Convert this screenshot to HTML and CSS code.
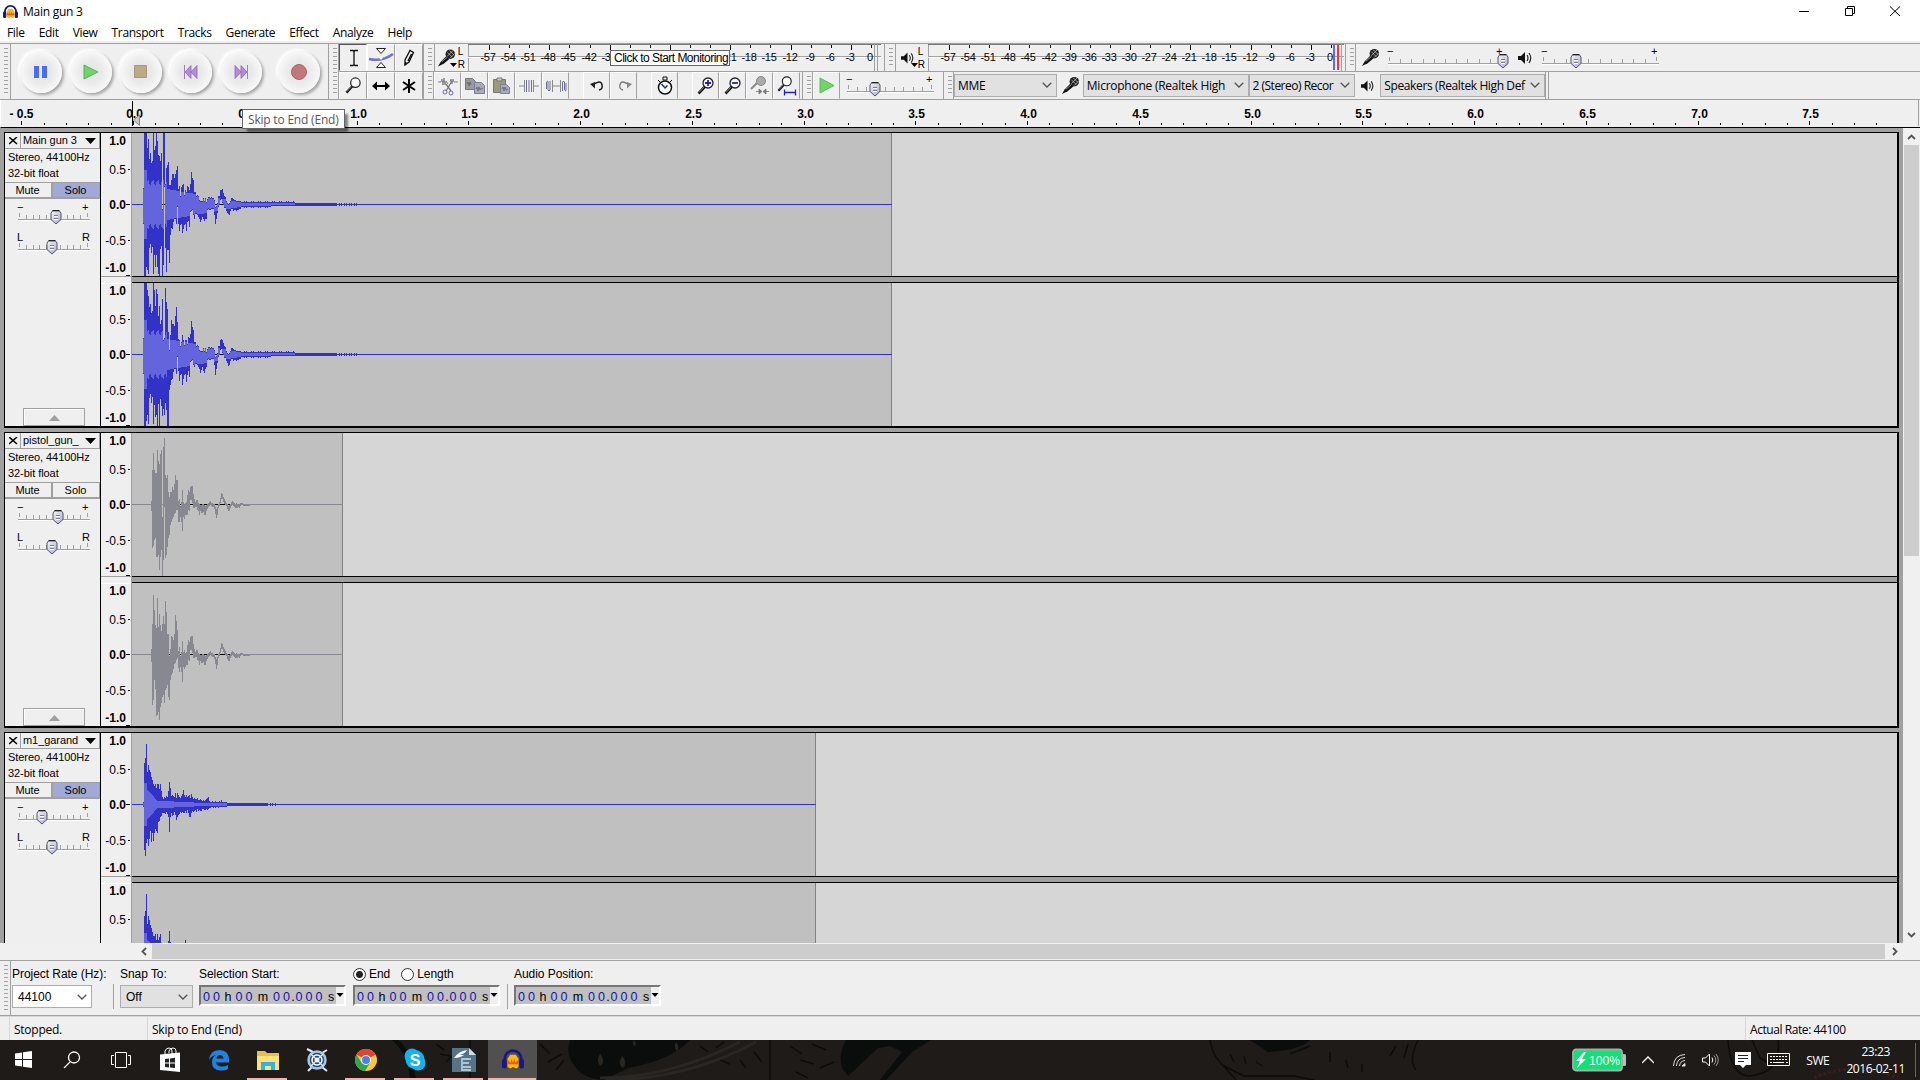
FILE: index.html
```
<!DOCTYPE html>
<html lang="en">
<head>
    <meta charset="UTF-8">
    <meta name="viewport" content="width=device-width, initial-scale=1.0">
    <title>Main gun 3</title>
    <link rel="stylesheet" href="styles.css">
</head>
<body>
    <!-- shared icons -->
    <svg class="defs" width="0" height="0">
        <defs>
            <linearGradient id="knobFill" x1="0" y1="0" x2="1" y2="1">
                <stop offset="0" stop-color="#f4f4ff"/><stop offset="1" stop-color="#a9a9cc"/>
            </linearGradient>
            <symbol id="knob" viewBox="0 0 12 15">
                <path d="M2.500 1h7L11 3v6.500L6 14 1 9.500V3z" fill="url(#knobFill)" stroke="#55556a"/>
                <path d="M2.500.5h7" stroke="#222"/>
                <path d="M4 5.500h4M4 8.500h4" stroke="#7a7aa0"/><path d="M4 6.500h4M4 9.500h4" stroke="#fff"/>
            </symbol>
            <symbol id="mic" viewBox="0 0 20 20">
                <path d="M1 19l3-5 6-6 3 3-6 5z" fill="#111"/>
                <circle cx="14" cy="6" r="5" fill="#222"/>
                <path d="M11 4l5 5M13 2l5 5M11 8l6-6M14 10l5-5" stroke="#bbb" stroke-width=".8"/>
                <path d="M5 14l6-5" stroke="#999"/>
            </symbol>
            <symbol id="speaker" viewBox="0 0 14 14">
                <path d="M0 5h3l4-4v12L3 9H0z" fill="#111"/>
                <path d="M9 4q2 3 0 6M11 2q3.500 5 0 10" fill="none" stroke="#222" stroke-width="1.200"/>
            </symbol>
            <symbol id="lens" viewBox="0 0 18 18">
                <path d="M1.500 16.500L8 9.500" stroke="#111" stroke-width="2.600"/>
                <path d="M2 15.500l5-5.500" stroke="#999" stroke-width=".8"/>
                <circle cx="11" cy="6" r="5" fill="#fafafa" stroke="#222" stroke-width="1.300"/>
            </symbol>
            <symbol id="down" viewBox="0 0 10 6"><path d="M.7.7L5 5 9.300.7" fill="none" stroke="#555" stroke-width="1.300"/></symbol>
            <symbol id="phones" viewBox="0 0 16 15">
                <path d="M2 10V7a6 6 0 0 1 12 0v3" fill="none" stroke="#17178a" stroke-width="2"/>
                <rect x="0" y="7" width="3.500" height="7" rx="1.500" fill="#17178a"/><rect x="12.500" y="7" width="3.500" height="7" rx="1.500" fill="#17178a"/>
                <path d="M4 13V7l2-3h4l2 3v6l-1.500 1L8 13l-2 1z" fill="#fdb813"/>
                <path d="M4 9l1-1 1 2 1-3 1 3 1-3 1 3 1-2 1 1v2H4z" fill="#ee5a12"/>
            </symbol>
        </defs>
    </svg>

    <header class="titlebar">
        <svg class="app-icon" width="15" height="14"><use href="#phones"/></svg>
        <span class="title">Main gun 3</span>
        <svg class="window-buttons" width="110" height="20" fill="none" stroke="#000">
            <path d="M3 9.500h10M49.500 6.500h7v7h-7zM51.500 6.500v-2h7v7h-2M94 4.500l10 9.500M104 4.500l-10 9.500"/>
        </svg>
    </header>

    <nav class="menubar">
        <span>File</span><span>Edit</span><span>View</span><span>Transport</span><span>Tracks</span><span>Generate</span><span>Effect</span><span>Analyze</span><span>Help</span>
    </nav>

    <section class="dock">
        <div class="toolbar transport">
            <i class="grip"></i>
            <div class="round-buttons">
                <button><svg width="14" height="14"><path d="M0 1h5v12H0zM8 1h5v12H8z" fill="#4a6cf0"/></svg></button>
                <button><svg width="16" height="16"><path d="M1 1l14 7-14 7z" fill="#6fd46b" stroke="#55b552"/></svg></button>
                <button><svg width="14" height="14"><path d="M.5.5h12v12H.5z" fill="#bba988" stroke="#a89878"/></svg></button>
                <button><svg width="14" height="14"><path d="M.5 0v14M7 .5v13L1 7zM13 .5v13L7 7z" fill="#b58be0" stroke="#8d66b5" stroke-width=".8"/></svg></button>
                <button><svg width="14" height="14"><path d="M13.500 0v14M1 .5v13L7 7zM7 .5v13L13 7z" fill="#b58be0" stroke="#8d66b5" stroke-width=".8"/></svg></button>
                <button class="record"><svg width="16" height="16"><circle cx="8" cy="8" r="7.500" fill="#c27878" stroke="#a86464"/></svg></button>
            </div>
        </div>

        <div class="toolbar tools">
            <i class="grip"></i>
            <div class="tool-grid">
                <span class="tool pressed"><svg width="12" height="18"><path d="M2 1.500h3l1 1 1-1h3M6 2v14M2 16.500h3l1-1 1 1h3" fill="none" stroke="#111" stroke-width="1.300"/></svg></span>
                <span class="tool"><svg width="26" height="22"><path d="M1 12q13 3 24-5" fill="none" stroke="#6c72dd" stroke-width="2.600"/><path d="M8.500 1.500h9L13 6.500zM8.500 20.500h9L13 15.500z" fill="#fff" stroke="#222"/><circle cx="13" cy="11" r="1.500" fill="#fff"/></svg></span>
                <span class="tool"><svg width="12" height="18"><path d="M2 16l0-5 5-9.500 3.500 2L6 13z" fill="#eee" stroke="#111" stroke-width="1.300"/><path d="M2 16l1-3M5 12l3.500-7" stroke="#111" stroke-width="1.500"/></svg></span>
                <span class="tool"><svg width="17" height="17"><use href="#lens"/></svg></span>
                <span class="tool"><svg width="18" height="12"><path d="M3 6h12" stroke="#000" stroke-width="2"/><path d="M0 6l5-4.500v9zM18 6l-5-4.500v9z"/></svg></span>
                <span class="tool"><svg width="16" height="16"><path d="M8 1v14M2 4l12 8M14 4L2 12" stroke="#000" stroke-width="2"/></svg></span>
            </div>
        </div>

        <div class="dock-rows">
            <div class="dock-row">
                <div class="toolbar meter-in">
                    <i class="grip"></i>
                    <div class="meter-head">
                        <svg width="19" height="20"><use href="#mic"/></svg>
                        <svg class="arrow" width="7" height="4"><path d="M0 0h7L3.500 4z"/></svg>
                        <span class="lr">L<br>R</span>
                    </div>
                    <svg class="meter" id="meterIn" width="413" height="27"></svg>
                    <span class="tip monitor-tip">Click to Start Monitoring</span>
                </div>
                <div class="toolbar meter-out">
                    <i class="grip"></i>
                    <div class="meter-head">
                        <svg width="13" height="14"><use href="#speaker"/></svg>
                        <svg class="arrow" width="7" height="4"><path d="M0 0h7L3.500 4z"/></svg>
                        <span class="lr">L<br>R</span>
                    </div>
                    <svg class="meter" id="meterOut" width="416" height="27"></svg>
                </div>
                <div class="toolbar mixer">
                    <i class="grip"></i>
                    <svg class="mixer-mic" width="19" height="19"><use href="#mic"/></svg>
                    <svg class="slider" data-width="116" data-value="115" data-ticks="10" width="130" height="24"></svg>
                    <svg class="mixer-speaker" width="14" height="14"><use href="#speaker"/></svg>
                    <svg class="slider" data-width="117" data-value="34" data-ticks="10" width="130" height="24"></svg>
                </div>
            </div>

            <div class="dock-row">
                <div class="toolbar edit">
                    <i class="grip"></i>
                    <span class="btn"><svg width="20" height="20" fill="none"><path d="M0 6h3l1-3 1 6 1-7 1 7 1-4 2 3M12 6l1-3 1 5 1-5 1 3h4" stroke="#888"/><path d="M14 5L8 15M8 8l5 7" stroke="#777" stroke-width="1.300"/><circle cx="7" cy="16" r="2" stroke="#6a6ab0"/><circle cx="13" cy="17" r="2" stroke="#6a6ab0"/></svg></span>
                    <span class="btn"><svg width="20" height="18"><path d="M.5 1.500h7l3 3v8H.5z" fill="#9a9a9a" stroke="#777"/><path d="M9.500 5.500h7l3 3v8h-10z" fill="#a9a9b8" stroke="#7b7baf"/><path d="M2 7l1-2 1 4 1-4 1 3M11 12l1-2 1 4 1-4 1 3 1-2 2 1" stroke="#666" fill="none" stroke-width=".8"/></svg></span>
                    <span class="btn"><svg width="18" height="18"><path d="M.5 2.500h12v13H.5z" fill="#9d9a76" stroke="#777"/><path d="M4 1h5v3H4z" fill="#ccc" stroke="#777"/><path d="M7.500 7.500h6l3 3v6h-9z" fill="#a9a9b8" stroke="#7b7baf"/><path d="M9 12l1-2 1 4 1-4 1 3 2-1" stroke="#666" fill="none" stroke-width=".8"/></svg></span>
                    <span class="btn"><svg width="20" height="16" fill="none" stroke="#6e6e9a"><path d="M0 8h5M15 8h5M5.500 2v12M14.500 2v12" stroke="#888"/><path d="M7.500 2v12M10 2v12M12.500 2v12"/></svg></span>
                    <span class="btn"><svg width="21" height="16" fill="none" stroke="#6e6e9a"><path d="M6.500 2v12M14.500 2v12M6 8h8" stroke="#888"/><path d="M.5 11V4q1.500-2 1.500 0v8q1 2 2 0V3M16.500 13V4q1-2 2 0v8q1.500 2 1.500 0V5"/></svg></span>
                    <span class="btn gap"><svg width="15" height="12"><path d="M3 5q8-6 9 0 1 4-3 5" fill="none" stroke="#222" stroke-width="1.500"/><path d="M0 4l5 4.500V2z" fill="#222"/></svg></span>
                    <span class="btn"><svg width="15" height="12"><path d="M12 5q-8-6-9 0-1 4 3 5" fill="none" stroke="#777" stroke-width="1.300"/><path d="M15 4l-5 4.500V2z" fill="#888"/></svg></span>
                    <span class="btn gap"><svg width="18" height="20"><circle cx="9" cy="11.500" r="6.500" fill="#fff" stroke="#111" stroke-width="1.500"/><path d="M7 1h4v3H7zM2 4l2 2M16 4l-2 2" fill="#eee" stroke="#111"/><path d="M5.500 8l3.500 4 2.500-2.500" fill="none" stroke="#2222bb" stroke-width="1.500"/></svg></span>
                    <span class="btn gap"><svg width="18" height="18"><use href="#lens"/><path d="M8 6h6M11 3v6" stroke="#22b" stroke-width="1.800"/></svg></span>
                    <span class="btn"><svg width="18" height="18"><use href="#lens"/><path d="M8 6h6" stroke="#22b" stroke-width="1.800"/></svg></span>
                    <span class="btn"><svg width="20" height="20"><path d="M1 13l6-6" stroke="#888" stroke-width="2"/><circle cx="11" cy="5" r="4.500" fill="#aaa" stroke="#888"/><path d="M6 15.500h5M14 15.500h5M9 13l3 2.500-3 2.500zM16 13l-3 2.500 3 2.500z" fill="#777" stroke="#777" stroke-width=".8"/></svg></span>
                    <span class="btn"><svg width="20" height="20"><use href="#lens" width="16" height="16"/><path d="M7 16.500h12M7.500 13.500v6M18.500 13.500v6" stroke="#22b" stroke-width="1.300"/></svg></span>
                </div>
                <div class="toolbar speed">
                    <i class="grip"></i>
                    <span class="btn"><svg width="16" height="17"><path d="M1 1l14 7.500L1 16z" fill="#6fd46b" stroke="#5cba58"/></svg></span>
                    <svg class="slider" data-width="87" data-value="28" data-ticks="9" width="98" height="24"></svg>
                </div>
                <div class="toolbar device">
                    <i class="grip"></i>
                    <span class="combo host">MME<svg width="10" height="6"><use href="#down"/></svg></span>
                    <svg class="device-mic" width="19" height="19"><use href="#mic"/></svg>
                    <span class="combo input">Microphone (Realtek High<svg width="10" height="6"><use href="#down"/></svg></span>
                    <span class="combo channels">2 (Stereo) Recor<svg width="10" height="6"><use href="#down"/></svg></span>
                    <svg class="device-speaker" width="13" height="14"><use href="#speaker"/></svg>
                    <span class="combo output">Speakers (Realtek High Def<svg width="10" height="6"><use href="#down"/></svg></span>
                </div>
            </div>
        </div>
    </section>

    <section class="timeline">
        <svg id="ruler" width="1918" height="27"></svg>
        <span class="tip skip-tip">Skip to End (End)</span>
    </section>

    <main class="workspace">
        <div class="tracks">
            <article class="track solo" data-wave="main" data-end="760" data-gain="38">
                <h2>Main gun 3</h2>
            </article>
            <article class="track muted" data-wave="pistol" data-end="211" data-gain="40">
                <h2>pistol_gun_</h2>
            </article>
            <article class="track solo" data-wave="garand" data-end="684" data-gain="24">
                <h2>m1_garand</h2>
            </article>
        </div>
        <div class="vscroll">
            <svg width="9" height="6"><path d="M1 5l3.500-3.500L8 5" fill="none" stroke="#555" stroke-width="1.800"/></svg>
            <i></i>
            <svg width="9" height="6"><path d="M1 1l3.500 3.500L8 1" fill="none" stroke="#555" stroke-width="1.800"/></svg>
        </div>
    </main>

    <div class="hscroll">
        <svg width="6" height="9"><path d="M5 1L1.500 4.500 5 8" fill="none" stroke="#555" stroke-width="1.800"/></svg>
        <i></i>
        <svg width="6" height="9"><path d="M1 1l3.500 3.500L1 8" fill="none" stroke="#555" stroke-width="1.800"/></svg>
    </div>

    <section class="selection">
        <i class="grip"></i>
        <div class="field rate">
            <label>Project Rate (Hz):</label>
            <span class="combo">44100<svg width="10" height="6"><use href="#down"/></svg></span>
        </div>
        <div class="field snap">
            <label>Snap To:</label>
            <span class="combo">Off<svg width="10" height="6"><use href="#down"/></svg></span>
        </div>
        <div class="field start">
            <label>Selection Start:</label>
            <svg class="time" width="147" height="21"></svg>
        </div>
        <div class="field end">
            <label><i class="radio on"></i>End<i class="radio"></i>Length</label>
            <svg class="time" width="147" height="21"></svg>
        </div>
        <div class="field position">
            <label>Audio Position:</label>
            <svg class="time" width="147" height="21"></svg>
        </div>
    </section>

    <footer class="status">
        <span class="state">Stopped.</span>
        <span class="hint">Skip to End (End)</span>
        <span class="actual">Actual Rate: 44100</span>
    </footer>

    <div class="taskbar">
        <svg class="wallpaper" width="1920" height="40">
            <g fill="#0b0c0c">
                <path d="M398 0q14 10 18 40h-6Q408 14 392 0zM570 0q-6 16 8 30 6 8 26 10l24-12q44-8 62-28zM846 0q-8 14-4 28l6 8 30-28 12-2 12 6-22 28h6l26-28 22-14zM1250 0h60q-10 10-42 12z"/>
            </g>
            <g fill="none" stroke="#0d0c0b" stroke-width="1.500">
                <path d="M1210 0q2 14 10 22l16 18M1224 26l20 10h50l20 4M1418 0q-10 20-2 30M1728 0q2 34 20 36 34-2 30-36M1752 0l8 18 10 6"/>
                <path d="M436 4l8 6M440 14l10 2M446 22l6-6M456 8l6 8M470 0v40M540 4l10 10M548 22l14-8M556 30l8-10M770 0v40M700 6l8 6M716 8l8-6M720 20l10 4M790 6l12 8M800 20l14 4M812 4l14 6M820 28l14-6M796 32l12 6M740 20l6 8M754 12l8 10M1230 14l4 8M1244 16l2 8M1256 22l6 4M1290 14l20-8M1330 12v10M1346 20l2 8M1362 24v8M1390 16l6-10M1408 4l-4 14"/>
            </g>
            <g fill="none" stroke="#2a2722" stroke-width="3"><path d="M600 38q70 0 140-36M606 40q80 0 150-38"/></g>
            <g fill="#2a2722"><path d="M600 14q6 6 1 12-6-4-1-12zM622 16q6 6 1 12-6-4-1-12zM676 2q4 6 1 9-4-4-1-9zM634 0q3 4 1 6-4-2-1-6z"/></g>
            <path d="M1814 38q40-18 84 0" fill="none" stroke="#3a1d1a" stroke-width="3" stroke-dasharray="3 2"/>
        </svg>
        <div class="apps">
            <span><svg width="17" height="17" fill="#fff"><path d="M0 2.500l7-1V8H0zM8 1.300L17 0v8H8zM0 9h7v6.500l-7-1zM8 9h9v8l-9-1.300z"/></svg></span>
            <span><svg width="18" height="18" fill="none" stroke="#fff" stroke-width="1.300"><circle cx="11" cy="6.500" r="5.500"/><path d="M7 11l-6 6"/></svg></span>
            <span><svg width="20" height="16" fill="none" stroke="#fff"><path d="M4.500.5h11v15h-11zM3 3.500H.5v9H3M17 3.500h2.500v9H17"/></svg></span>
            <span><svg width="22" height="26"><path d="M1 7.500l20-2V25L1 23z" fill="#fff"/><path d="M6 7V4q1-3 4-3t3 3v3M10 6V4q1-3 4-3t3 3v2" fill="none" stroke="#fff"/><path d="M6 12l4-.5v4H6zM11 11.500l5-.7v4.700h-5zM6 16.500h4v4l-4-.4zM11 16.500h5v4.600l-5-.6z" fill="#222"/></svg></span>
            <span><svg width="22" height="22"><path d="M1 11Q2 1 11.500 1 21 1.500 21 11v2.500H8q1 4 6 4 3 0 6-1.500v4Q17 22 12 21.500 4 21 4 13q0-5 4-7Q3 7 1 11zM8.500 9.500h7Q15 6 12 6T8.500 9.500z" fill="#1f83dd"/></svg></span>
            <span class="open"><svg width="22" height="22"><path d="M0 2h8l2 2h12v17H0z" fill="#e9bd4e"/><path d="M0 7h22v14H0z" fill="#fde27c"/><path d="M4 21v-8h14v8h-4v-4H8v4z" fill="#35b0e6"/></svg></span>
            <span><svg width="22" height="24"><g fill="none" stroke="#a9c6e8"><path d="M1 1l6 3M21 2l-5 3M2 23l4-4M21 23l-5-4" stroke="#dbe8f8" stroke-width="2"/><circle cx="11" cy="12" r="8.500" fill="#2b4a7a" stroke-width="2.500"/><circle cx="11" cy="12" r="5" stroke="#fff" stroke-width="1.500"/><path d="M5 6l12 12M17 6L5 18" stroke="#dbe8f8" stroke-width="1.300"/></g><circle cx="11" cy="12" r="2.500" fill="#e9f2ff"/></svg></span>
            <span class="open"><svg width="22" height="22"><circle cx="11" cy="11" r="11" fill="#fcc934"/><path d="M11 11L1.500 5.500A11 11 0 0 1 20.500 5.500z" fill="#df4434"/><path d="M1.500 5.500A11 11 0 0 0 10 22l5.300-8.500H6.500z" fill="#35a252"/><circle cx="11" cy="11" r="5" fill="#fff"/><circle cx="11" cy="11" r="4" fill="#4484f0"/></svg></span>
            <span class="open"><svg width="22" height="23"><circle cx="8" cy="8" r="7.500" fill="#16b1ef"/><circle cx="14" cy="15" r="7.500" fill="#16b1ef"/><circle cx="11" cy="11.500" r="9.500" fill="#16b1ef"/><text x="5.700" y="17.500" class="skype">S</text></svg></span>
            <span class="open"><svg width="24" height="24"><path d="M0 0h17l7 7v17H0z" fill="#55748a"/><path d="M17 0l7 7h-7z" fill="#d5dde2"/><path d="M2 10q5-7 13-8-2 4-8 5 3 0 5 0-4 3-10 3z" fill="#fff"/><path d="M10 11h9M10 15h7M10 19h9M10 22h9M10 10v13" stroke="#b4c4ce" stroke-width="1.800"/></svg></span>
            <span class="open active"><svg width="22" height="21"><use href="#phones"/></svg></span>
        </div>
        <div class="tray">
            <svg class="battery" width="54" height="24"><rect x="50" y="6" width="4" height="12" rx="1.500" fill="#bbb"/><rect x="1" y="1.500" width="49" height="21" rx="3" fill="#10e077" stroke="#aaa" stroke-width="1.800"/><path d="M12 4L4 13h4l-3 7 9-9h-4l4-7z" fill="#fff"/><text x="17" y="17" textLength="31" lengthAdjust="spacingAndGlyphs">100%</text></svg>
            <svg class="chevron" width="12" height="8"><path d="M0 7l6-6 6 6" fill="none" stroke="#fff" stroke-width="1.300"/></svg>
            <svg width="13" height="13" fill="none" stroke="#ddd"><path d="M.5 12Q1 1 12 .5M3.500 12Q4 4 12 3.500M6.500 12Q7 7 12 6.500"/><path d="M9 12h3v-2.500z" fill="#fff"/></svg>
            <svg width="17" height="15" fill="none" stroke="#fff"><path d="M.5 5h3l4-4v12l-4-4h-3z"/><path d="M10 4.500q1.500 2.500 0 5"/><path d="M12 2.500q3.500 4.500 0 9M14 1q4.500 6 0 12" stroke="#999"/></svg>
            <svg width="16" height="16"><path d="M0 0h16v13h-5l-3 3-3-3H0z" fill="#fff"/><path d="M3 3.500h10M3 6.500h10M3 9.500h6" stroke="#222"/></svg>
            <svg width="24" height="14" fill="none" stroke="#fff"><path d="M.5.5h22v12H.5z"/><path d="M3 3.500h18M3 6.500h18" stroke-dasharray="2 1"/><path d="M3 9.500h2M6 9.500h11M19 9.500h2"/></svg>
            <span class="lang">SWE</span>
            <span class="clock">23:23<br>2016-02-11</span>
        </div>
    </div>

    <script src="app.js"></script>
</body>
</html>
```

FILE: styles.css
```
* {
    box-sizing: border-box;
}

body {
    margin: 0;
    width: 1920px;
    height: 1080px;
    overflow: hidden;
    display: flex;
    flex-direction: column;
    background: #efefef;
    color: #000;
    font-family: "Open Sans", "Noto Sans", sans-serif;
    font-size: 12px;
    white-space: nowrap;
}

svg {
    display: block;
    flex: none;
}

svg text {
    font-family: "Liberation Sans", Arial, sans-serif;
}

.defs {
    position: absolute;
}

/* title and menu */
.titlebar {
    height: 22px;
    flex: none;
    display: flex;
    align-items: center;
    background: #fff;
    padding: 1px 16px 0 3px;
}

.title {
    margin-left: 5px;
    letter-spacing: -0.25px;
}

.window-buttons {
    margin-left: auto;
    margin-right: -2px;
}

.menubar {
    height: 21px;
    flex: none;
    display: flex;
    gap: 14px;
    padding: 2px 0 0 7px;
    line-height: 18px;
    background: linear-gradient(#fff 19px, #efefef 19px);
    letter-spacing: -0.33px;
}

/* toolbars */
.dock {
    height: 57px;
    flex: none;
    display: flex;
    border-top: 1px solid #a0a0a0;
    border-bottom: 1px solid #a0a0a0;
}

.toolbar {
    display: flex;
    align-items: center;
    position: relative;
}

.grip {
    flex: none;
    align-self: stretch;
    width: 11px;
    border-right: 1px solid #a0a0a0;
    background: repeating-linear-gradient(#a0a0a0 0 1px, #efefef 1px 4px) 4px 4px / 4px calc(100% - 8px) no-repeat;
}

.transport {
    width: 329px;
    border-right: 1px solid #a0a0a0;
}

.round-buttons {
    display: flex;
    gap: 8px;
    padding-left: 9px;
}

.round-buttons button {
    width: 42px;
    height: 42px;
    padding: 0;
    border: none;
    border-radius: 50%;
    display: flex;
    align-items: center;
    justify-content: center;
    background: radial-gradient(#e9e9e9 35%, #f6f6f6 65%, #fbfbfb);
    box-shadow: 2px 2px 3px #a5a5a5, -2px -2px 3px #fff;
}

.round-buttons .record {
    margin-left: 8px;
}

.tools {
    width: 95px;
    border-right: 1px solid #a0a0a0;
}

.tools .grip {
    width: 10px;
}

.tool-grid {
    display: grid;
    grid-template-columns: 28px 28px 28px;
    grid-template-rows: 27px 27px;
    row-gap: 1px;
    background: #a0a0a0;
}

.tool,
.btn {
    display: flex;
    align-items: center;
    justify-content: center;
    background: #efefef;
    border: 1px solid #fff;
    border-right-color: #a0a0a0;
    border-bottom-color: #efefef;
}

.tool.pressed {
    border-color: #555 #fff #efefef #555;
    padding-left: 2px;
}

.dock-rows {
    flex: 1;
    display: grid;
    grid-template-rows: 27px 27px;
    row-gap: 1px;
    background: #a0a0a0;
}

.dock-row {
    display: flex;
    background: #efefef;
}

.meter-in {
    width: 461px;
    border-right: 1px solid #a0a0a0;
}

.meter-out {
    width: 461px;
    border-right: 1px solid #a0a0a0;
}

.meter-head {
    display: flex;
    align-items: center;
    width: 33px;
    padding-left: 2px;
    position: relative;
}

.meter-out .meter-head {
    width: 32px;
    padding-left: 5px;
}

.meter-head .arrow {
    position: absolute;
    left: 15px;
    top: 18px;
}

.lr {
    margin-left: auto;
    margin-right: 3px;
    font: 10px/13px "Liberation Sans", Arial, sans-serif;
}

.meter text {
    font-size: 11px;
    letter-spacing: -0.3px;
    text-anchor: middle;
}

.tip {
    position: absolute;
    z-index: 2;
    background: #fff;
    border: 1px solid #666;
    line-height: 14px;
}

.monitor-tip {
    left: 186px;
    top: 6px;
    width: 120px;
    padding: 0 3px;
    font: 12px/14px "Liberation Sans", Arial, sans-serif;
    letter-spacing: -0.53px;
}

.mixer .grip {
    width: 10px;
}

.mixer-mic {
    margin-left: 5px;
}

.mixer .slider {
    margin-left: 3px;
    margin-top: -2px;
}

.mixer .mixer-speaker {
    margin: 0 2px 0 5px;
}

.slider text {
    font-size: 11px;
}

.edit,
.speed {
    align-items: stretch;
}

.edit .grip,
.speed .grip {
    width: 10px;
}

.btn {
    width: 27px;
}

.btn.gap {
    margin-left: 14px;
}

.btn svg {
    margin-left: 1px;
}

.edit {
    width: 379px;
    border-right: 1px solid #a0a0a0;
}

.speed {
    width: 141px;
    border-right: 1px solid #a0a0a0;
}

.speed .slider {
    margin: 1px 0 0 2px;
}

.device .grip {
    width: 10px;
}

.combo {
    display: flex;
    align-items: center;
    justify-content: space-between;
    height: 23px;
    padding: 0 4px 1px 3px;
    border: 1px solid #adadad;
    background: #e1e1e1;
    letter-spacing: -0.25px;
}

.host {
    width: 103px;
}

.device-mic {
    margin: 0 3px 0 4px;
}

.input {
    width: 166px;
}

.channels {
    width: 107px;
    letter-spacing: -0.5px;
}

.device-speaker {
    margin: 0 6px;
}

.output {
    width: 165px;
    letter-spacing: -0.38px;
}

.device {
    width: 605px;
    border-right: 4px double #a0a0a0;
}

/* ruler */
.timeline {
    position: relative;
    height: 28px;
    flex: none;
    border-bottom: 1px solid #000;
    border-left: 1px solid #fff;
}

#ruler text {
    font-size: 12px;
    font-weight: bold;
    text-anchor: middle;
}

.skip-tip {
    left: 241px;
    top: 9px;
    width: 103px;
    height: 20px;
    padding: 1px 5px;
    line-height: 17px;
    color: #575757;
    box-shadow: 4px 4px 2px -1px rgba(0, 0, 0, 0.45);
    letter-spacing: -0.2px;
}

/* tracks */
.workspace {
    height: 815px;
    flex: none;
    display: flex;
    overflow: hidden;
    position: relative;
}

.tracks {
    width: 1903px;
    padding: 4px 4px 0;
    display: flex;
    flex-direction: column;
    gap: 4px;
    background: #a0a0a0;
}

.track {
    width: 1895px;
    height: 296px;
    flex: none;
    display: flex;
    border: 1px solid #000;
    border-right-width: 2px;
    border-bottom-width: 2px;
}

.panel {
    width: 96px;
    display: flex;
    flex-direction: column;
    background: #efefef;
    border-right: 1px solid #000;
    font: 11px/16px "Liberation Sans", Arial, sans-serif;
    letter-spacing: -0.06px;
}

.panel-head {
    display: flex;
    height: 16px;
    border-bottom: 1px solid #a0a0a0;
}

.close {
    width: 16px;
    padding: 4px 0 0 4px;
    border-right: 1px solid #a0a0a0;
}

.panel h2 {
    flex: 1;
    margin: 0;
    padding: 0 3px 0 2px;
    display: flex;
    align-items: center;
    justify-content: space-between;
    font: inherit;
    line-height: 15px;
    border-right: 1px solid #a0a0a0;
}

.info {
    height: 34px;
    padding: 0 0 0 3px;
    border-bottom: 1px solid #a0a0a0;
}

.switches {
    display: flex;
    height: 16px;
    line-height: 14px;
    border-bottom: 2px solid #a0a0a0;
    text-align: center;
}

.switches span {
    width: 46px;
    padding-right: 1px;
    border-right: 1px solid #a0a0a0;
}

.switches span:first-child {
    width: 48px;
    border-right-width: 2px;
}

.switches span:last-child {
    width: 47px;
}

.solo .switches span:last-child {
    background: #a1a9d4;
}

.panel .slider {
    margin: 2px 0 0 8px;
}

.panel .slider + .slider {
    margin-top: 6px;
}

.collapse {
    width: 62px;
    height: 18px;
    margin: auto 0 0 18px;
    border: 1px solid #a0a0a0;
    box-shadow: inset 1px 1px #fff;
    padding: 6px 0 0 25px;
}

.scale {
    width: 31px;
    background: #efefef;
    border-right: 1px solid #a0a0a0;
}

.scale text {
    font-size: 12px;
    text-anchor: end;
}

.scale .strong {
    font-weight: bold;
}

.waves {
    width: 1765px;
    background: #a0a0a0;
}

.waves svg {
    background: #d6d6d6;
}

.waves svg + svg {
    margin-top: 5px;
    border-top: 1px solid #000;
}

.waves svg:first-child {
    border-bottom: 1px solid #000;
}

/* scrollbars */
.vscroll {
    width: 17px;
    display: flex;
    flex-direction: column;
    align-items: center;
    padding: 6px 0 5px;
    background: #f0f0f0;
}

.vscroll i {
    width: 15px;
    height: 411px;
    margin: 5px 0 auto;
    background: #cdcdcd;
}

.hscroll {
    height: 17px;
    flex: none;
    display: flex;
    align-items: center;
    padding-left: 141px;
    background: #f0f0f0;
}

.hscroll i {
    width: 1733px;
    height: 15px;
    margin: 0 7px 0 5px;
    background: #cdcdcd;
}

/* selection toolbar */
.selection {
    height: 56px;
    flex: none;
    display: flex;
    border-top: 1px solid #a0a0a0;
    border-bottom: 1px solid #a0a0a0;
    font: 12px/14px "Liberation Sans", Arial, sans-serif;
}

.field {
    padding-top: 6px;
    display: flex;
    flex-direction: column;
    gap: 4px;
}

.field label {
    height: 14px;
    display: flex;
    align-items: center;
    letter-spacing: -0.05px;
}

.selection .combo {
    letter-spacing: 0;
    padding: 1px 4px 0 5px;
}

.rate {
    width: 103px;
    padding-left: 1px;
    border-right: 1px solid #a0a0a0;
    border-image: linear-gradient(transparent 23px, #a0a0a0 23px 47px, transparent 47px) 1;
}

.rate .combo {
    width: 80px;
    background: #fff;
}

.snap {
    width: 85px;
    padding-left: 6px;
}

.snap .combo {
    width: 73px;
}

.start {
    width: 154px;
}

.end {
    width: 155px;
    border-right: 1px solid #a0a0a0;
    border-image: linear-gradient(transparent 23px, #a0a0a0 23px 47px, transparent 47px) 1;
}

.position {
    padding-left: 6px;
}

.radio {
    width: 13px;
    height: 13px;
    margin: 0 3px 0 0;
    border: 1px solid #333;
    border-radius: 50%;
    background: #fff;
}

.radio.on {
    background: radial-gradient(#222 3px, #fff 4px);
}

.radio + .radio {
    margin-left: 11px;
}

.time {
    border: 2px solid #777;
    border-right-color: #fff;
    border-bottom-color: #fff;
    background: #c0c0c0;
}

.time text {
    font-size: 12.5px;
    text-anchor: middle;
}

/* status bar */
.status {
    height: 24px;
    flex: none;
    display: flex;
    line-height: 25px;
    padding-left: 9px;
    border-top: 1px solid #d7d7d7;
    letter-spacing: -0.25px;
}

.status span {
    padding-left: 4px;
    border-left: 1px solid #d7d7d7;
}

.state {
    width: 138px;
}

.hint {
    width: 1598px;
}

.actual {
    letter-spacing: -0.43px;
}

/* windows taskbar */
.taskbar {
    height: 40px;
    flex: none;
    display: flex;
    justify-content: space-between;
    position: relative;
    background: #1f1b18;
    color: #fff;
}

.wallpaper {
    position: absolute;
    left: 0;
    top: 0;
}

.apps,
.tray {
    position: relative;
    display: flex;
    align-items: center;
}

.apps span {
    width: 49px;
    height: 40px;
    padding-bottom: 1px;
    display: flex;
    align-items: center;
    justify-content: center;
}

.apps span:first-child {
    width: 47px;
}

.apps .open {
    background: linear-gradient(#f7b0aa, #f7b0aa) 4px 38px / 40px 2px no-repeat;
}

.apps .active {
    background: linear-gradient(#f7b0aa, #f7b0aa) 0 38px / 48px 2px no-repeat, rgba(160, 160, 160, 0.4);
}

.skype {
    font-size: 16px;
    font-weight: bold;
    fill: #fff;
}

.tray {
    gap: 16px;
    padding-right: 4px;
}

.battery text {
    font-size: 12px;
    fill: #fff;
}

.chevron {
    margin-right: 3px;
}

.lang {
    margin-left: -1px;
    margin-right: 1px;
    letter-spacing: -0.4px;
}

.clock {
    line-height: 17px;
    text-align: center;
    padding-right: 10px;
    border-right: 1px solid #666;
    letter-spacing: -0.4px;
}
```

FILE: app.js
```
const SVG = 'http://www.w3.org/2000/svg';

// peaks per pixel column as "above,below" the zero line
const WAVES = {
    main: {
        from: 11,
        channels: [
            '16,19 71,71 71,71 71,62 56,65 65,69 45,43 51,39 41,48 43,42 71,69 54,50 58,62 71,50 63,62 49,69 48,71 43,44 51,41 -5,71 71,60 71,-18 20,43 36,67 39,45 42,45 19,58 19,30 24,23 30,24 30,17 26,14 30,14 34,19 38,2 15,19 18,26 8,20 17,19 19,28 20,24 9,20 14,19 12,26 18,17 17,16 14,22 20,7 32,6 26,5 24,10 12,14 12,9 8,9 9,10 8,12 4,14 3,17 3,15 3,12 6,14 3,16 6,14 2,14 5,5 7,4 7,5 6,5 7,4 6,4 6,4 4,10 -3,19 -2,14 1,8 8,2 8,0 14,-5 14,-6 15,-2 11,0 8,3 7,3 3,6 1,8 0,9 1,10 3,6 6,4 6,4 5,6 4,5 4,5 3,6 3,5 3,5 3,4 3,4',
            '16,19 71,71 71,71 71,66 64,60 58,69 47,43 50,39 41,48 43,42 71,69 64,50 48,62 65,60 60,71 38,49 48,71 30,44 34,51 55,61 14,54 16,60 66,48 52,55 45,71 22,71 4,35 19,30 34,25 30,24 30,17 28,14 38,14 47,19 32,2 15,16 14,26 8,20 12,19 19,30 14,24 9,20 14,19 14,27 10,20 17,16 16,22 20,7 33,6 27,5 24,10 12,12 12,9 8,9 9,10 8,12 4,14 3,18 3,15 3,12 6,16 3,18 6,14 2,12 5,5 7,4 7,5 6,5 7,4 6,4 6,4 4,10 -3,20 -2,14 1,8 8,2 8,0 14,-5 15,-6 14,-2 11,0 8,3 7,3 3,6 1,8 0,11 1,10 3,6 6,4 6,4 5,6 4,5 4,5 3,6 3,5 3,5 3,4 3,4'
        ],
        tail: 118
    },
    pistol: {
        from: 19,
        channels: [
            '3,6 34,43 51,41 34,35 31,33 31,52 54,52 43,50 40,65 50,52 54,45 -13,71 57,55 66,2 29,53 26,50 29,42 12,33 7,30 12,20 12,17 17,14 14,12 20,9 29,8 24,5 24,5 3,17 5,17 -2,12 2,17 14,26 2,12 0,14 1,10 2,10 9,10 14,5 12,6 17,-5 18,-5 18,-2 10,3 5,3 2,2 4,2 4,5 1,6 0,10 -1,6 -1,8 0,8 0,7 -1,10 -2,10 -1,6 0,4 1,2 2,1 3,0 1,1 1,2 0,2 0,4 -3,9 -5,13 -3,10 0,3 2,1 6,-2 11,-6 10,-6 7,-3 5,-1 3,0 1,1 0,4 -2,6 -1,6 0,3 2,1 3,0 2,1 1,2 0,3 1,3 0,3 0,2 0,3 1,1 1,0 1,0 0,1 0,1 0,1 0,1 0,1 0,1 0,1 0,0',
            '5,7 30,50 59,45 44,25 29,34 26,61 56,60 27,57 40,65 29,52 23,48 30,42 38,40 30,48 53,35 42,33 20,30 20,42 -2,45 5,25 18,20 17,18 14,14 20,9 39,8 33,5 24,3 3,13 7,17 -2,12 2,17 13,27 2,12 4,14 1,12 2,10 9,10 14,5 12,6 17,-5 18,-5 18,-2 10,3 5,3 2,2 4,2 4,5 1,6 0,10 -1,6 -1,8 0,8 0,7 -1,10 -2,10 -1,6 0,4 1,2 2,1 3,0 1,1 1,2 0,2 0,4 -3,9 -5,14 -3,10 0,3 2,1 6,-2 11,-6 10,-6 7,-3 5,-1 3,0 1,1 0,4 -2,6 -1,6 0,3 2,1 3,0 2,1 1,2 0,3 1,3 0,3 0,2 0,3 1,1 1,0 1,0 0,1 0,1 0,1 0,1 0,1 0,1 0,1 0,0'
        ],
        tail: 0
    },
    garand: {
        from: 11,
        channels: [
            '2,2 41,45 46,51 60,38 32,34 39,41 34,34 32,26 27,37 24,28 20,36 18,28 20,24 16,26 20,28 20,17 15,16 20,12 13,11 7,8 5,8 7,8 6,9 8,7 7,9 13,12 22,27 16,12 8,8 9,11 8,10 7,7 11,10 6,15 11,12 9,10 7,9 6,7 8,8 10,7 14,8 9,8 7,6 9,8 7,5 8,8 9,12 6,12 10,8 7,6 5,7 6,6 5,5 5,7 6,4 4,6 4,5 5,6 4,6 3,4 4,4 3,5 4,5 5,4 6,5 7,4 3,3 2,3 2,2 3,2 2,3 2,2 3,3 2,2 2,2 2,3 3,2 2,2 4,2 2,2 2,2 2,2 2,2 2,2',
            '2,2 38,45 43,51 60,38 30,34 38,41 34,34 29,26 26,37 22,28 18,36 18,28 20,24 14,26 20,28 14,17 17,16 20,12 11,11 7,8 5,8 7,8 6,9 8,7 7,9 13,12 23,27 12,12 8,8 9,11 8,10 7,7 11,10 6,15 8,12 9,10 7,9 6,7 8,8 10,7 10,8 9,8 14,6 9,8 7,5 8,8 9,12 6,12 10,8 7,6 5,7 6,6 5,5 5,7 6,4 4,6 4,5 5,6 4,6 3,4 4,4 3,5 4,5 5,4 6,5 7,4 3,3 2,3 2,2 3,2 2,3 2,2 3,3 2,2 2,2 2,3 3,2 2,2 4,2 2,2 2,2 2,2 2,2 2,2'
        ],
        tail: 50
    }
};

// inner (rms) height for a column
function rms(wave, i) {
    if (wave === 'garand') return i < 4 ? 21 : Math.max(1, 18 - i * 1.05, 4 - i / 20);
    if (i < 4) return 34;
    if (i < 24) return [24, 22, 20, 23, 19][i * 7 % 5];
    return Math.max(1, 15 - (i - 24) * 0.18);
}

function columns(wave, list, inner) {
    let d = '';
    list.forEach(([up, down], i) => {
        const x = WAVES[wave].from + i;
        let top = up, bottom = down;
        if (inner) {
            const r = Math.round(rms(wave, i));
            top = Math.min(up - 1, r);
            bottom = Math.min(down - 1, r);
        }
        const h = top + bottom + 1;
        if (h > 0 && !(inner && h < 2)) d += `M${x} ${71 - top}h1v${h}h-1z`;
    });
    return d;
}

function drawWave(name, channel, end) {
    const wave = WAVES[name];
    const list = wave.channels[channel].split(' ').map(p => p.split(',').map(Number));
    for (let i = 0; i < wave.tail; i++) {
        const h = i / wave.tail;
        let v = 1;
        if (h < 0.45) v = i * 11 % 7 < 5 ? 2 : 3;
        if (h > 0.8) v = i * 7 % 5 < 2 ? 1 : 0;
        if (name === 'garand') v = Math.min(v, 1);
        list.push([v, h > 0.25 ? Math.min(v, 1) : v]);
    }
    const grey = name === 'pistol';
    const dark = grey ? '#888890' : '#3232c8';
    return `<svg width="1765" height="144" shape-rendering="crispEdges">
        <rect width="${end}" height="143" fill="#c0c0c0"/>
        <rect x="${end - 1}" width="1" height="143" fill="#808080"/>
        <rect y="71" width="${end}" height="1" fill="${dark}"/>
        <rect x="${wave.from + 15}" y="71" width="85" height="1" fill="#000"/>
        <path d="${columns(name, list, false)}" fill="${dark}"/>
        ${grey ? '' : `<path d="${columns(name, list, true)}" fill="#6464dc"/>`}
    </svg>`;
}

function scale() {
    let s = '';
    [0, 150].forEach(y => {
        s += `<text class="strong" x="25" y="${y + 12}">1.0</text>
            <text x="25" y="${y + 41}">0.5</text>
            <text class="strong" x="25" y="${y + 76}">0.0</text>
            <text x="25" y="${y + 112}">-0.5</text>
            <text class="strong" x="25" y="${y + 139}">-1.0</text>
            <path d="M27 ${y + 36.5}h2M25 ${y + 71.5}h4M27 ${y + 107.5}h2M25 ${y + 142.5}h4" stroke="#000"/>`;
    });
    return `<svg width="30" height="293">${s}<path d="M0 143.500h30" stroke="#a0a0a0"/><path d="M0 150.500h30" stroke="#fff"/></svg>`;
}

// horizontal slider: track line, ticks, end labels and the knob
function fillSlider(el) {
    const w = +el.dataset.width, value = +el.dataset.value, n = +el.dataset.ticks;
    const [a, b] = (el.dataset.ends || '−,+').split(',');
    let s = `<path d="M5 18.500h${w}" stroke="#a0a0a0"/><path d="M5 19.500h${w}" stroke="#fff"/>`;
    for (let i = 0; i <= n; i++) {
        const x = Math.round(6 + i * (w - 4) / n) + 0.5;
        s += `<path d="M${x} ${i % n ? 14 : 12}v4" stroke="#a0a0a0"/>`;
    }
    s += `<text x="4" y="10">${a}</text><text x="${w - 3}" y="10">${b}</text>`;
    s += `<use href="#knob" x="${5 + value - 6}" y="9" width="12" height="15"/>`;
    el.innerHTML = s;
}

document.querySelectorAll('.track').forEach(track => {
    const { wave, end, gain } = track.dataset;
    const name = track.querySelector('h2').textContent;
    track.innerHTML = `
        <div class="panel">
            <div class="panel-head">
                <svg class="close" width="16" height="15"><path d="M0 0l8 7M8 0L0 7" stroke="#000" stroke-width="1.500"/></svg>
                <h2>${name}<svg width="11" height="6"><path d="M0 0h11L5.500 6z"/></svg></h2>
            </div>
            <div class="info">Stereo, 44100Hz<br>32-bit float</div>
            <div class="switches"><span>Mute</span><span>Solo</span></div>
            <svg class="slider" data-width="72" data-value="${gain}" data-ticks="10" width="86" height="24"></svg>
            <svg class="slider" data-width="72" data-value="34" data-ticks="10" data-ends="L,R" width="86" height="24"></svg>
            <div class="collapse"><svg width="11" height="6"><path d="M5.500 0L11 6H0z" fill="#a0a0a0"/></svg></div>
        </div>
        <div class="scale">${scale()}</div>
        <div class="waves">${drawWave(wave, 0, +end)}${drawWave(wave, 1, +end)}</div>`;
});

document.querySelectorAll('.slider').forEach(fillSlider);

// level meters
function fillMeter(el, first, step) {
    let s = '<path d="M.5 0v27" stroke="#a0a0a0"/><path d="M0 12.500h999" stroke="#a0a0a0"/><path d="M0 13.500h999" stroke="#fff"/><path d="M0 .5h999" stroke="#777"/>';
    for (let i = 0; i < 20; i++) {
        const x = Math.round(first + i * step);
        s += `<path d="M${x + 0.5} 1v${i % 3 ? 3 : 5}" stroke="#000"/><text x="${x - 1}" y="17">${i === 19 ? 0 : i * 3 - 57}</text>`;
    }
    el.innerHTML = s;
}
fillMeter(document.getElementById('meterIn'), 21, 20.1);
fillMeter(document.getElementById('meterOut'), 21, 20.1);
document.getElementById('meterIn').innerHTML += '<path d="M406.500 0v27M409.500 0v27" stroke="#a0a0a0"/>';
document.getElementById('meterOut').innerHTML += '<path d="M406 1v25" stroke="#6464ff" stroke-width="2"/><path d="M410 1v25" stroke="#ff3030" stroke-width="2"/><path d="M413.500 0v27" stroke="#a0a0a0"/>';

// time ruler, 223.5px per second
let marks = '';
for (let i = -5; i < 79; i++) {
    const x = Math.round(132 + i * 22.35) + 0.5;
    const major = i % 5 === 0;
    marks += `<path d="M${x} ${major ? 21 : 23}v${major ? 4 : 2}" stroke="#000"/>`;
    if (major) marks += `<text x="${x + (i < 0 ? 0 : 1)}" y="18">${i < 0 ? '- 0.5' : (i / 10).toFixed(1)}</text>`;
}
marks += '<path d="M131.500 1v25" stroke="#000"/><path d="M138.500 15v10.500L132.500 20z" fill="#c8c8c8" stroke="#888"/><path d="M1917.500 0v26" stroke="#a0a0a0"/>';
document.getElementById('ruler').innerHTML = marks;

// time fields
document.querySelectorAll('.time').forEach(el => {
    const xs = [5.500, 15.500, 27, 38, 48, 62, 75.500, 85.500, 92, 98, 108, 118, 130];
    el.innerHTML = [...'00h00m00.000s'].map((c, i) =>
        `<text x="${xs[i]}" y="13.500" fill="${/\d/.test(c) ? '#1414a8' : '#000'}">${c}</text>`).join('') +
        '<rect x="135" width="8" height="17" fill="#efefef"/><path d="M135.500 6h7L139 10z"/>';
});
```
